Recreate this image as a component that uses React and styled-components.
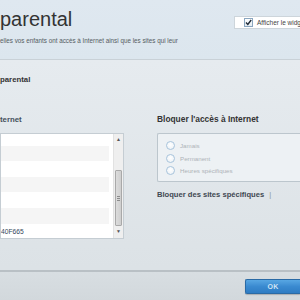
import React from 'react';
import styled, { createGlobalStyle } from 'styled-components';

const Global = createGlobalStyle`
  html, body { margin: 0; padding: 0; }
  body {
    width: 300px; height: 300px; overflow: hidden;
    font-family: "Liberation Sans", Arial, sans-serif;
    background: #e4e9ed;
  }
`;

const Page = styled.div`
  width: 300px;
  height: 300px;
  overflow: hidden;
  display: flex;
  flex-direction: column;
  background: linear-gradient(to bottom, #e6ebef 60px, #dce2e6 268px);
`;

const Header = styled.header`
  height: 59px;
  flex: none;
  border-bottom: 1px solid #c9d1d7;
  background: linear-gradient(to bottom, #dfe8f0, #dce6ee);
  display: grid;
  grid-template-columns: 1fr auto;
  align-items: start;
`;

const TitleBlock = styled.div`
  padding-top: 8px;
  display: flex;
  flex-direction: column;
  gap: 7px;
  white-space: nowrap;
`;

const Title = styled.h1`
  margin: 0;
  font-size: 20px;
  font-weight: normal;
  line-height: 22px;
  color: #333;
`;

const Desc = styled.p`
  margin: 0;
  font-size: 6.3px;
  line-height: 8px;
  color: #555c62;
`;

const WidgetToggle = styled.label`
  margin-top: 16px;
  width: 66px;
  height: 13px;
  box-sizing: border-box;
  background: #fff;
  border: 1px solid #cdd5db;
  border-right: none;
  display: flex;
  align-items: center;
  gap: 4px;
  padding-left: 9px;
  white-space: nowrap;
  overflow: hidden;
  font-size: 6.5px;
  color: #444;
`;

const CheckBox = styled.span`
  width: 7px;
  height: 7px;
  flex: none;
  border: 1px solid #8aa6c0;
  background: linear-gradient(#fff, #e4ecf3);
  display: flex;
  align-items: center;
  justify-content: center;
`;

const Main = styled.main`
  flex: 1;
  display: flex;
  flex-direction: column;
  padding-top: 15px;
`;

const SectionTitle = styled.h2`
  margin: 0;
  font-size: 7.8px;
  line-height: 9px;
  font-weight: bold;
  color: #333;
`;

const Columns = styled.div`
  margin-top: 31px;
  display: grid;
  grid-template-columns: 124px 170px;
  column-gap: 33px;
`;

const Column = styled.div`
  display: flex;
  flex-direction: column;
`;

const ColTitle = styled.h3`
  margin: 0 0 9px;
  font-size: ${p => (p.$dark ? '8.4px' : '7.8px')};
  line-height: 9px;
  font-weight: bold;
  color: ${p => (p.$dark ? '#333' : '#45505c')};
`;

const ListBox = styled.div`
  height: 106px;
  box-sizing: border-box;
  border: 1px solid #c5cdd3;
  background: #fff;
  display: flex;
  overflow: hidden;
`;

const Rows = styled.div`
  flex: 1;
  padding-right: 4px;
  display: flex;
  flex-direction: column;
`;

const Row = styled.div`
  height: ${p => p.$h}px;
  flex: none;
  background: ${p => (p.$odd ? '#f5f5f5' : '#fff')};
  display: flex;
  align-items: center;
  font-size: 6.7px;
  color: #34465a;
`;

const Scrollbar = styled.div`
  width: 9px;
  flex: none;
  background: #efefef;
  border-left: 1px solid #e2e2e2;
  display: flex;
  flex-direction: column;
  align-items: center;
`;

const Arrow = styled.div`
  height: 10px;
  width: 100%;
  display: flex;
  align-items: center;
  justify-content: center;
  font-size: 5px;
  color: #555;
`;

const Thumb = styled.div`
  margin-top: ${p => p.$top}px;
  height: 56px;
  width: 7px;
  box-sizing: border-box;
  border: 1px solid #a9a9a9;
  border-radius: 1px;
  background: linear-gradient(to right, #dcdcdc, #cfcfcf);
  display: flex;
  flex-direction: column;
  align-items: center;
  justify-content: center;
  gap: 1px;
`;

const Grip = styled.span`
  width: 3px;
  height: 1px;
  background: #8c8c8c;
`;

const RadioBox = styled.div`
  height: 49px;
  box-sizing: border-box;
  border: 1px solid #bcc6cd;
  border-right: none;
  border-radius: 2px 0 0 2px;
  background: #edf1f4;
  padding: 7px 0 0 8px;
  display: flex;
  flex-direction: column;
  gap: 3.5px;
`;

const RadioRow = styled.label`
  display: flex;
  align-items: center;
  gap: 5px;
  height: 9px;
  font-size: 6.2px;
  color: #adb3b8;
`;

const RadioCircle = styled.span`
  width: 9px;
  height: 9px;
  box-sizing: border-box;
  border-radius: 50%;
  border: 1px solid #a8c4dc;
  background: radial-gradient(circle at 50% 40%, #ffffff, #e9eff4);
  flex: none;
`;

const SubTitle = styled.h3`
  margin: 8px 0 0;
  font-size: 7.6px;
  line-height: 9px;
  font-weight: bold;
  color: #3e4852;
  display: flex;
  gap: 5px;
`;

const Caret = styled.span`
  font-weight: normal;
  color: #8a9299;
`;

const Footer = styled.footer`
  height: 30px;
  flex: none;
  border-top: 2px solid #b9c0c5;
  background: linear-gradient(to bottom, #d8dee2, #d2d8dc);
  display: flex;
  justify-content: flex-end;
  align-items: flex-start;
  padding-top: 7px;
  box-sizing: border-box;
`;

const OkButton = styled.button`
  width: 55px;
  height: 15px;
  padding: 0;
  border: 1px solid #2a6aa5;
  border-right: none;
  border-radius: 2px 0 0 2px;
  background: linear-gradient(to bottom, #58a7e3, #3a8ad0 50%, #2e7cc3);
  box-shadow: 0 1px 1px rgba(0, 0, 0, 0.2);
  color: #cfe3f4;
  font-family: "Liberation Sans", Arial, sans-serif;
  font-size: 7px;
  font-weight: bold;
  letter-spacing: 0.3px;
`;

const rows = [
  { h: 12, odd: false },
  { h: 15, odd: true },
  { h: 16, odd: false },
  { h: 15, odd: true },
  { h: 16, odd: false },
  { h: 16, odd: true },
  { h: 14, odd: false, text: '40F665' },
];

export default function App() {
  return (
    <>
      <Global />
      <Page>
        <Header>
          <TitleBlock>
            <Title>parental</Title>
            <Desc>elles vos enfants ont accès à Internet ainsi que les sites qui leur</Desc>
          </TitleBlock>
          <WidgetToggle>
            <CheckBox>
              <svg width="7" height="7" viewBox="0 0 7 7">
                <path d="M1 3.6 L2.8 5.4 L6.2 1" fill="none" stroke="#1e2a36" strokeWidth="1.4" />
              </svg>
            </CheckBox>
            Afficher le widget
          </WidgetToggle>
        </Header>
        <Main>
          <SectionTitle>parental</SectionTitle>
          <Columns>
            <Column>
              <ColTitle>ternet</ColTitle>
              <ListBox>
                <Rows>
                  {rows.map((r, i) => (
                    <Row key={i} $h={r.h} $odd={r.odd}>{r.text}</Row>
                  ))}
                </Rows>
                <Scrollbar>
                  <Arrow>▲</Arrow>
                  <Thumb $top={26}>
                    <Grip /><Grip /><Grip />
                  </Thumb>
                  <Arrow>▼</Arrow>
                </Scrollbar>
              </ListBox>
            </Column>
            <Column>
              <ColTitle $dark>Bloquer l'accès à Internet</ColTitle>
              <RadioBox>
                <RadioRow><RadioCircle />Jamais</RadioRow>
                <RadioRow><RadioCircle />Permanent</RadioRow>
                <RadioRow><RadioCircle />Heures spécifiques</RadioRow>
              </RadioBox>
              <SubTitle>Bloquer des sites spécifiques <Caret>|</Caret></SubTitle>
            </Column>
          </Columns>
        </Main>
        <Footer>
          <OkButton>OK</OkButton>
        </Footer>
      </Page>
    </>
  );
}
